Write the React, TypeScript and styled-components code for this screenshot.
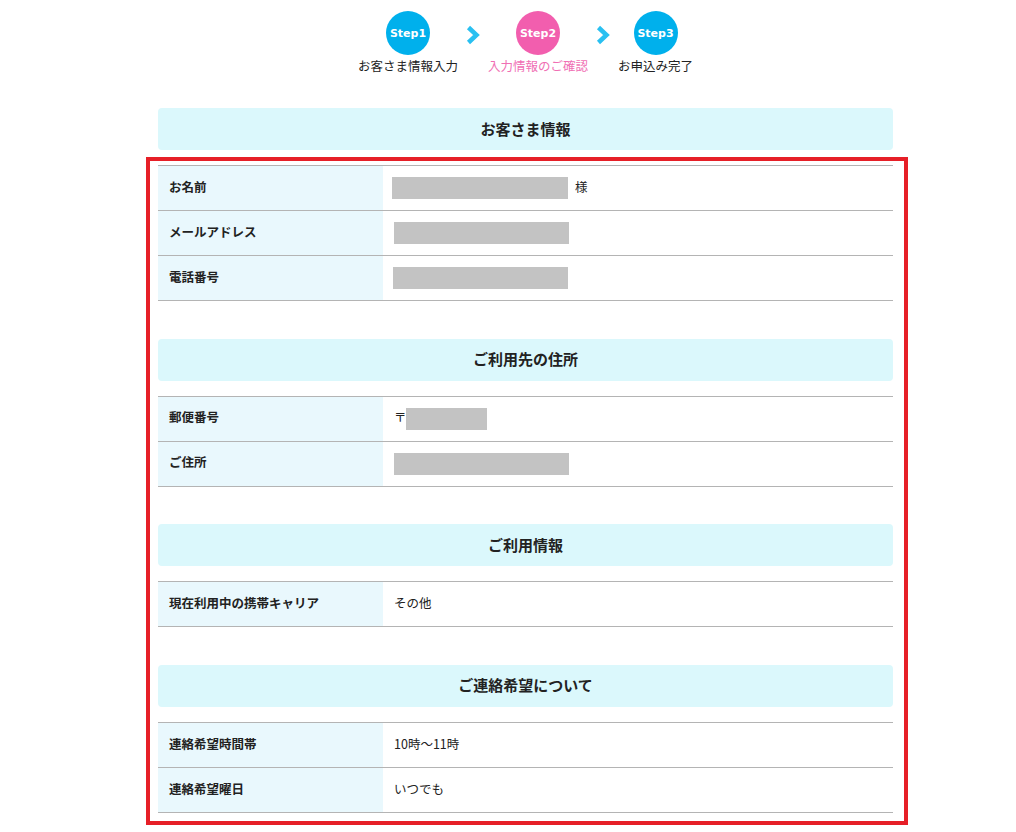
import { FC, ReactNode } from "react";
import styled, { createGlobalStyle } from "styled-components";

const GlobalStyle = createGlobalStyle`
  body {
    margin: 0;
    background: #ffffff;
    color: #222222;
    font-family: "Noto Sans CJK JP", "Noto Sans", sans-serif;
  }
`;

const Page = styled.div`
  width: 735px;
  margin-left: 158px;
  padding-bottom: 40px;
`;

const Steps = styled.div`
  display: flex;
  justify-content: center;
  align-items: flex-start;
  gap: 8px;
  padding-top: 11px;
  margin-bottom: 33px;
`;

const Step = styled.div`
  display: flex;
  flex-direction: column;
  align-items: center;
`;

const Circle = styled.div<{ $active?: boolean }>`
  width: 44px;
  height: 44px;
  border-radius: 50%;
  background: ${(p) => (p.$active ? "#f25eae" : "#00b0ec")};
  color: #ffffff;
  display: flex;
  align-items: center;
  justify-content: center;
  font-family: "DejaVu Sans", Verdana, sans-serif;
  font-weight: bold;
  font-size: 11px;
`;

const StepLabel = styled.div<{ $active?: boolean }>`
  margin-top: 2px;
  font-size: 12.5px;
  line-height: 18px;
  white-space: nowrap;
  color: ${(p) => (p.$active ? "#f06fb4" : "#222222")};
`;

const Arrow = styled.svg`
  margin-top: 14px;
  flex: none;
`;

const SectionTitle = styled.h2`
  margin: 0;
  height: 42px;
  padding-bottom: 2px;
  box-sizing: border-box;
  display: flex;
  align-items: center;
  justify-content: center;
  background: #dbf8fc;
  border-radius: 4px;
  font-size: 15px;
  line-height: 1;
  font-weight: bold;
  color: #222222;
`;

const Highlight = styled.div`
  margin: 7px -15px 0 -12px;
  padding: 4px 11px 8.5px 8px;
  border: 4px solid #e61f27;
`;

const Section = styled.section<{ $first?: boolean }>`
  margin-top: ${(p) => (p.$first ? "0" : "37.6px")};
`;

const Table = styled.div<{ $gap?: boolean }>`
  margin-top: ${(p) => (p.$gap ? "15px" : "0")};
  border-top: 1px solid #b4b4b4;
`;

const Row = styled.div`
  display: flex;
  height: 44px;
  border-bottom: 1px solid #b4b4b4;
`;

const Label = styled.div`
  width: 225px;
  flex: none;
  display: flex;
  align-items: center;
  padding: 0 0 2px 11px;
  box-sizing: border-box;
  background: #e9f8fd;
  font-size: 12.5px;
  line-height: 1;
  font-weight: bold;
  color: #222222;
`;

const Value = styled.div`
  flex: 1;
  display: flex;
  align-items: center;
  padding-left: 11px;
  font-size: 12.5px;
  line-height: 1;
  color: #222222;
`;

const Text = styled.span`
  margin-bottom: 2px;
`;

const Masked = styled.span<{ $w: number; $shift?: number }>`
  display: inline-block;
  width: ${(p) => p.$w}px;
  height: 22px;
  margin-left: ${(p) => p.$shift ?? 0}px;
  background: #c3c3c3;
`;

const Suffix = styled.span`
  margin: 0 0 2px 7px;
`;

const Prefix = styled.span`
  margin: 0 -1px 2px 0;
`;

const Chevron: FC = () => (
  <Arrow width="14" height="20" viewBox="0 0 14 20">
    <polyline
      points="2.5,2.5 10.5,10 2.5,17.5"
      fill="none"
      stroke="#29c0f1"
      strokeWidth="4.5"
    />
  </Arrow>
);

type Item = { label: string; value: ReactNode };

const InfoTable: FC<{ items: Item[]; gap?: boolean }> = ({ items, gap }) => (
  <Table $gap={gap}>
    {items.map((it) => (
      <Row key={it.label}>
        <Label>{it.label}</Label>
        <Value>
          {typeof it.value === "string" ? <Text>{it.value}</Text> : it.value}
        </Value>
      </Row>
    ))}
  </Table>
);

const App: FC = () => (
  <>
    <GlobalStyle />
    <Page>
      <Steps>
        <Step>
          <Circle>Step1</Circle>
          <StepLabel>お客さま情報入力</StepLabel>
        </Step>
        <Chevron />
        <Step>
          <Circle $active>Step2</Circle>
          <StepLabel $active>入力情報のご確認</StepLabel>
        </Step>
        <Chevron />
        <Step>
          <Circle>Step3</Circle>
          <StepLabel>お申込み完了</StepLabel>
        </Step>
      </Steps>

      <SectionTitle>お客さま情報</SectionTitle>
      <Highlight>
        <Section $first>
          <InfoTable
            items={[
              {
                label: "お名前",
                value: (
                  <>
                    <Masked $w={176} $shift={-2} />
                    <Suffix>様</Suffix>
                  </>
                ),
              },
              { label: "メールアドレス", value: <Masked $w={175} /> },
              { label: "電話番号", value: <Masked $w={175} $shift={-1} /> },
            ]}
          />
        </Section>

        <Section>
          <SectionTitle>ご利用先の住所</SectionTitle>
          <InfoTable
            gap
            items={[
              {
                label: "郵便番号",
                value: (
                  <>
                    <Prefix>〒</Prefix>
                    <Masked $w={81} />
                  </>
                ),
              },
              { label: "ご住所", value: <Masked $w={175} /> },
            ]}
          />
        </Section>

        <Section>
          <SectionTitle>ご利用情報</SectionTitle>
          <InfoTable
            gap
            items={[{ label: "現在利用中の携帯キャリア", value: "その他" }]}
          />
        </Section>

        <Section>
          <SectionTitle>ご連絡希望について</SectionTitle>
          <InfoTable
            gap
            items={[
              { label: "連絡希望時間帯", value: "10時～11時" },
              { label: "連絡希望曜日", value: "いつでも" },
            ]}
          />
        </Section>
      </Highlight>
    </Page>
  </>
);

export default App;
